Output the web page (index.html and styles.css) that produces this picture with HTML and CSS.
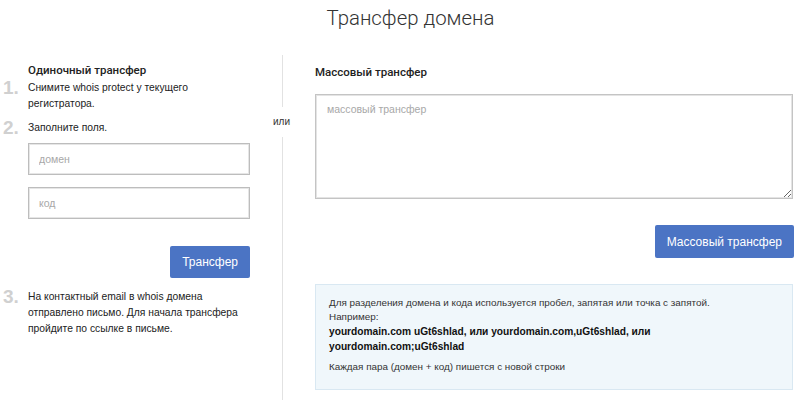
FILE: index.html
```html
<!DOCTYPE html>
<html lang="ru">
<head>
    <meta charset="UTF-8">
    <meta name="viewport" content="width=device-width, initial-scale=1.0">
    <title>Трансфер домена</title>
    <link rel="stylesheet" href="styles.css">
</head>
<body>

<h1 class="page-title">Трансфер домена</h1>

<div class="transfer">
    <!-- одиночный трансфер -->
    <div class="single">
        <h3 class="block-title">Одиночный трансфер</h3>

        <div class="step">
            <span class="step-num">1.</span>
            <p class="step-text">Снимите whois protect у текущего регистратора.</p>
        </div>

        <div class="step">
            <span class="step-num">2.</span>
            <p class="step-text">Заполните поля.</p>
        </div>

        <div class="single-form">
            <input type="text" class="field" placeholder="домен">
            <input type="text" class="field" placeholder="код">
            <div class="actions">
                <button class="btn">Трансфер</button>
            </div>
        </div>

        <div class="step step-last">
            <span class="step-num">3.</span>
            <p class="step-text">На контактный email в whois домена отправлено письмо. Для начала трансфера пройдите по ссылке в письме.</p>
        </div>
    </div>

    <!-- разделитель -->
    <div class="divider">
        <span class="divider-or">или</span>
    </div>

    <!-- массовый трансфер -->
    <div class="bulk">
        <h3 class="block-title">Массовый трансфер</h3>
        <textarea class="bulk-area" placeholder="массовый трансфер"></textarea>
        <div class="actions">
            <button class="btn btn-wide">Массовый трансфер</button>
        </div>
        <div class="hint">
            <p>Для разделения домена и кода используется пробел, запятая или точка с запятой.<br>
            Например:<br>
            <b>yourdomain.com uGt6shlad, или yourdomain.com,uGt6shlad, или yourdomain.com;uGt6shlad</b></p>
            <p>Каждая пара (домен + код) пишется с новой строки</p>
        </div>
    </div>
</div>

</body>
</html>
```

FILE: styles.css
```css
body {
    font-family: 'Liberation Sans', Arial, sans-serif;
    font-size: 10.3px;
    color: #222;
    margin: 0;
    background-color: #fff;
}
.page-title {
    margin: 0;
    padding-top: 5px;
    height: 50px;
    text-align: center;
    font-family: 'Roboto', sans-serif;
    font-weight: 300;
    font-size: 20.4px;
    line-height: 26px;
    color: #333;
    padding-left: 21px;
    box-sizing: border-box;
}
.transfer {
    display: flex;
    padding-top: 5px;
}
.block-title {
    margin: 0;
    font-family: 'Roboto', sans-serif;
    font-weight: 500;
    font-size: 11.5px;
    line-height: 16px;
    color: #222;
}

/* левая колонка */
.single {
    width: 282px;
    box-sizing: border-box;
    padding: 7px 32px 0 3px;
}
.single .block-title {
    margin-left: 25px;
    margin-bottom: 2px;
}
.step {
    display: flex;
    margin-bottom: 8px;
}
.step-num {
    width: 25px;
    flex-shrink: 0;
    font-size: 19px;
    line-height: 16px;
    font-weight: bold;
    color: #d0d0d0;
}
.step-text {
    margin: 0;
    line-height: 16px;
    padding-right: 14px;
}
.single-form {
    margin-left: 25px;
    margin-top: -1px;
}
.field {
    display: block;
    width: 100%;
    height: 32px;
    box-sizing: border-box;
    margin: 0 0 12px 0;
    padding: 0 10px;
    border: 1px solid #bdbdbd;
    box-shadow: inset 0 0 0 1px #e6e6e6;
    font-family: inherit;
    font-size: 10.5px;
    color: #222;
}
.field::placeholder, .bulk-area::placeholder {
    color: #a8a8a8;
}
.actions {
    display: flex;
    justify-content: flex-end;
}
.single .actions {
    margin-top: 27px;
    margin-bottom: 11px;
}
.btn {
    height: 32px;
    padding: 0 12px;
    border: none;
    border-radius: 2px;
    background-color: #4b74c4;
    color: #fff;
    font-family: 'Liberation Sans', Arial, sans-serif;
    font-size: 12px;
    cursor: pointer;
}
.btn:hover {
    background-color: #3f66b3;
}
.step-last .step-text {
    padding-right: 0;
}

/* разделитель */
.divider {
    width: 1px;
    background-color: #e2e2e2;
    position: relative;
    min-height: 345px;
}
.divider-or {
    position: absolute;
    top: 52px;
    left: -9px;
    padding: 7px 0;
    background-color: #fff;
    font-size: 10px;
    line-height: 16px;
    color: #333;
}

/* правая колонка */
.bulk {
    flex: 1;
    padding: 9px 7px 0 32px;
}
.bulk .block-title {
    margin-bottom: 14px;
}
.bulk-area {
    display: block;
    width: 100%;
    height: 105px;
    box-sizing: border-box;
    padding: 8px 11px;
    border: 1px solid #c4c4c4;
    box-shadow: inset 0 0 0 1px #e4e4e4;
    font-family: inherit;
    font-size: 10.5px;
    resize: vertical;
}
.bulk .actions {
    margin: 26px -1px 26px 0;
}
.btn-wide {
    height: 33px;
    padding: 0 12px;
}
.hint {
    background-color: #f0f7fb;
    border: 1px solid #d9e8f2;
    padding: 11px 13px 9px;
    font-size: 9.9px;
    line-height: 14px;
    color: #333;
}
.hint p {
    margin: 0 0 6px 0;
}
.hint b {
    font-size: 10.2px;
    line-height: 15px;
    color: #111;
}
```
